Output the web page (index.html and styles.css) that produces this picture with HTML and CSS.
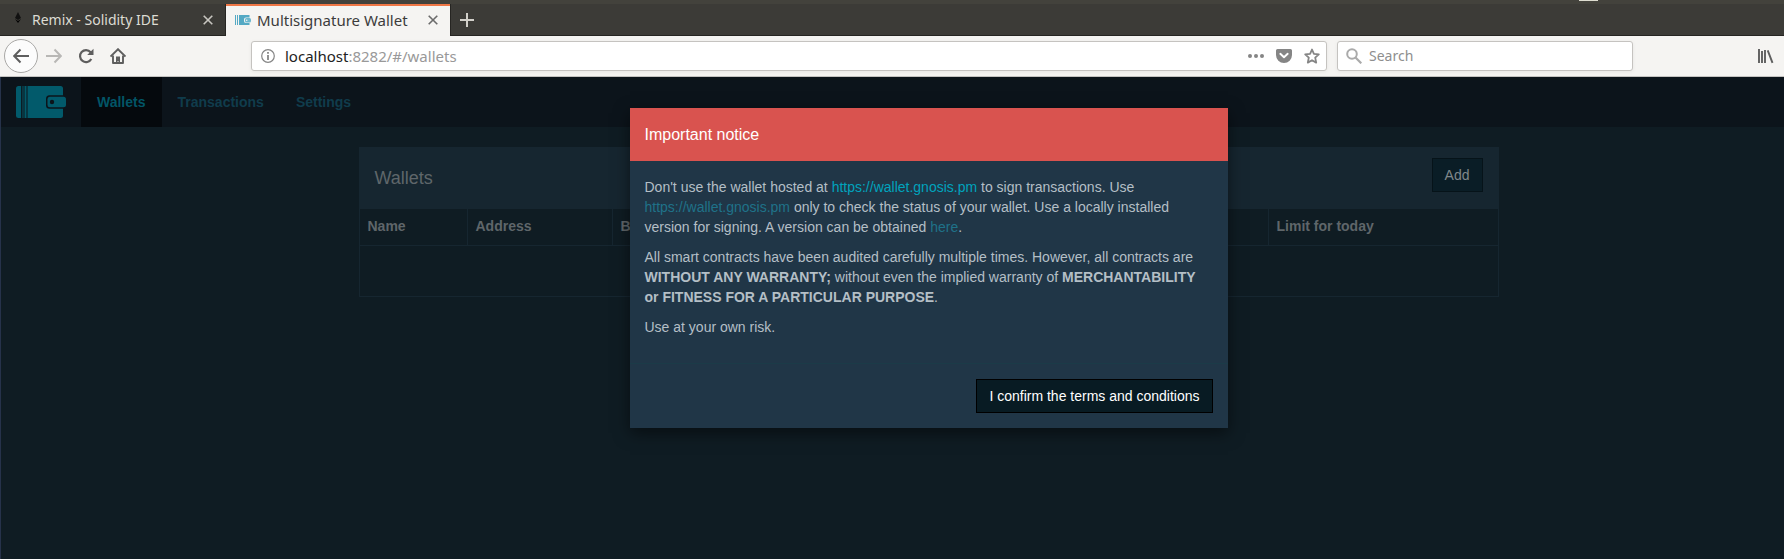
FILE: index.html
```html
<!DOCTYPE html>
<html lang="en">
<head>
<meta charset="utf-8">
<title>Multisignature Wallet</title>
<link rel="stylesheet" href="styles.css">
</head>
<body>
<header class="browser">
  <div class="desktop-edge"><span class="desktop-mark"></span></div>
  <div class="tabs">
    <div class="tab">
      <svg class="tab-icon" viewBox="0 0 16 16" width="16" height="16"><path d="M8 0 11 6 8 8 5 6Z" fill="#111"/><path d="M5 7 8 9 11 7 8 11Z" fill="#000"/></svg>
      <span class="tab-title">Remix - Solidity IDE</span>
      <button class="tab-close" aria-label="Close tab"><svg viewBox="0 0 10 10" width="10" height="10"><path d="M.7.7 9.3 9.3M9.3.7.7 9.3" fill="none" stroke="currentColor" stroke-width="1.6"/></svg></button>
    </div>
    <div class="tab tab-active">
      <svg class="tab-icon" viewBox="0 0 16 16" width="16" height="16"><path d="M0 3h1v10H0zM2 3h1v10H2zM4 3h10.500v2.500H11a2 2 0 0 0-2 2v1.500a2 2 0 0 0 2 2h3.500v2H4z" fill="#54a9c4"/><rect x="10" y="6" width="6" height="4.500" rx="1.500" fill="#6cb8cf"/><circle cx="11.700" cy="8.200" r=".8" fill="#f5f4f2"/></svg>
      <span class="tab-title">Multisignature Wallet</span>
      <button class="tab-close" aria-label="Close tab"><svg viewBox="0 0 10 10" width="10" height="10"><path d="M.7.7 9.3 9.3M9.3.7.7 9.3" fill="none" stroke="currentColor" stroke-width="1.6"/></svg></button>
    </div>
    <button class="new-tab" aria-label="New tab"><svg viewBox="0 0 14 14" width="14" height="14"><path d="M7 0v14M0 7h14" stroke="currentColor" stroke-width="2"/></svg></button>
  </div>
  <div class="toolbar">
    <div class="nav-buttons">
      <button class="nav-button back" aria-label="Back"><svg viewBox="0 0 16 16" width="16" height="16"><path d="M16 8H1.500M7.500 1.500 1.200 8l6.300 6.500" fill="none" stroke="currentColor" stroke-width="2"/></svg></button>
      <button class="nav-button forward" aria-label="Forward"><svg viewBox="0 0 16 16" width="16" height="16"><path d="M0 8h14.500M8.500 1.500 14.800 8l-6.300 6.500" fill="none" stroke="currentColor" stroke-width="2"/></svg></button>
      <button class="nav-button" aria-label="Reload"><svg viewBox="0 0 16 16" width="16" height="16"><path d="M12.600 4.200A6 6 0 1 0 13.300 11" fill="none" stroke="currentColor" stroke-width="2.200"/><path d="M15.500.800V7H9.200Z" fill="currentColor"/></svg></button>
      <button class="nav-button" aria-label="Home"><svg viewBox="0 0 16 16" width="16" height="16"><path d="M.5 8.500 8 1.200l7.500 7.300" fill="none" stroke="currentColor" stroke-width="1.900"/><path d="M3 7.500V15h10V7.500" fill="none" stroke="currentColor" stroke-width="1.900" stroke-linejoin="round"/><path d="M6 15V8.500h4V15H8.500v-2h-1v2z" fill="currentColor"/></svg></button>
    </div>
    <div class="field url-field">
      <svg viewBox="0 0 14 14" width="14" height="14"><circle cx="7" cy="7" r="6.300" fill="none" stroke="#858585" stroke-width="1.200"/><path d="M6.100 3h1.800v1.700H6.100zM6.100 6h1.800v5H6.100z" fill="#858585"/></svg>
      <a class="url" href="#/wallets"><span class="url-host">localhost</span>:8282/#/wallets</a>
      <button class="field-button" aria-label="Page actions"><svg viewBox="0 0 16 16" width="16" height="16"><g fill="currentColor"><circle cx="2" cy="8" r="2"/><circle cx="8" cy="8" r="2"/><circle cx="14" cy="8" r="2"/></g></svg></button>
      <button class="field-button" aria-label="Save to Pocket"><svg viewBox="0 0 16 16" width="16" height="16"><path d="M1.500 1h13A1.500 1.500 0 0 1 16 2.500V7A8 8 0 0 1 0 7V2.500A1.500 1.500 0 0 1 1.500 1Z" fill="currentColor"/><path d="M4.300 5.800 8 9.300l3.700-3.500" fill="none" stroke="#fff" stroke-width="1.900" stroke-linecap="round" stroke-linejoin="round"/></svg></button>
      <button class="field-button" aria-label="Bookmark"><svg viewBox="0 0 16 16" width="16" height="16"><path d="m8 1.500 1.900 4.300 4.900.5-3.600 3.300 1 5L8 12.200l-4.200 2.400 1-5L1.200 6.300l4.900-.5Z" fill="none" stroke="currentColor" stroke-width="1.800" stroke-linejoin="round"/></svg></button>
    </div>
    <label class="field search-field">
      <svg viewBox="0 0 16 16" width="16" height="16"><circle cx="6" cy="6" r="4.800" fill="none" stroke="#aaa" stroke-width="2"/><path d="m9.500 9.500 5.800 5.800" stroke="#aaa" stroke-width="2.200"/></svg>
      <input class="search-input" type="text" placeholder="Search" aria-label="Search">
    </label>
    <button class="library" aria-label="Library"><svg viewBox="0 0 16 16" width="16" height="16"><path d="M1 1v14M4 3v12M7 2v13M9.700 2.300l4.800 12.500" fill="none" stroke="currentColor" stroke-width="1.900"/></svg></button>
  </div>
</header>
<main class="page">
  <nav class="navbar">
    <a class="brand" href="#/" aria-label="Multisignature Wallet"><svg viewBox="0 0 50 32" width="50" height="32"><rect width="47" height="32" rx="2.500" fill="#025a6b"/><path d="M5.500 0v32M8 0v32M11 0v32" stroke="#0c141b" stroke-width="1"/><path d="M6.500 0v32" stroke="#0a3742" stroke-width="1.500"/><path d="M47 9.200H33.500a3.500 3.500 0 0 0-3.500 3.500v6.600a3.500 3.500 0 0 0 3.500 3.500H47z" fill="#0c141b"/><rect x="31.500" y="10.700" width="18.500" height="10.600" rx="2.500" fill="#025a6b"/><circle cx="36" cy="16" r="2.200" fill="#0c141b"/></svg></a>
    <a class="nav-link nav-link-active" href="#/wallets">Wallets</a>
    <a class="nav-link" href="#/transactions">Transactions</a>
    <a class="nav-link" href="#/settings">Settings</a>
  </nav>
  <div class="content">
    <section class="panel">
      <div class="panel-head">
        <h1 class="panel-title">Wallets</h1>
        <button class="button button-dim">Add</button>
      </div>
      <table class="wallets">
        <colgroup><col class="col-name"><col class="col-address"><col class="col-balance"><col class="col-today"></colgroup>
        <thead><tr><th>Name</th><th>Address</th><th>Balance</th><th>Limit for today</th></tr></thead>
      </table>
      <div class="panel-foot"></div>
    </section>
    <div class="dialog" role="dialog" aria-labelledby="notice-title">
      <div class="dialog-head"><h2 class="dialog-title" id="notice-title">Important notice</h2></div>
      <div class="dialog-body">
        <p>Don't use the wallet hosted at <a class="link link-focus" href="#wallet">https://wallet.gnosis.pm</a> to sign transactions. Use <a class="link" href="#wallet">https://wallet.gnosis.pm</a> only to check the status of your wallet. Use a locally installed version for signing. A version can be obtained <a class="link" href="#releases">here</a>.</p>
        <p>All smart contracts have been audited carefully multiple times. However, all contracts are <b>WITHOUT ANY WARRANTY;</b> without even the implied warranty of <b>MERCHANTABILITY or FITNESS FOR A PARTICULAR PURPOSE</b>.</p>
        <p>Use at your own risk.</p>
      </div>
      <div class="dialog-foot"><button class="button">I confirm the terms and conditions</button></div>
    </div>
  </div>
</main>
</body>
</html>
```
FILE: styles.css
```css
* { box-sizing: border-box; }
html, body { height: 100%; }
body {
  margin: 0;
  display: flex;
  flex-direction: column;
  overflow: hidden;
  background: #0f1c23;
  font-family: "Liberation Sans", Arial, sans-serif;
  font-size: 14px;
  line-height: 20px;
}
button {
  margin: 0;
  padding: 0;
  border: 0;
  background: none;
  color: inherit;
  font: inherit;
}
a { text-decoration: none; }
svg { display: block; flex: none; }

/* Browser window */
.browser {
  font-family: "Noto Sans", "Open Sans", sans-serif;
  font-size: 14px;
  border-bottom: 1px solid #c4c3c1;
}
.desktop-edge {
  display: flex;
  justify-content: flex-end;
  height: 4px;
  padding-right: 186px;
  background: #43423c;
}
.desktop-mark { width: 19px; height: 1px; background: #dddcd0; }
.tabs {
  display: flex;
  height: 32px;
  background: #3c3b37;
  box-shadow: inset 0 -1px #262522;
}
.tab {
  display: flex;
  align-items: center;
  width: 225px;
  padding: 0 12px 0 10px;
  color: #dddbd3;
}
.tab-icon { margin-right: 6px; }
.tab-title { flex: 1; white-space: nowrap; }
.tab-close { color: #c8c6c0; }
.tab-active {
  width: 226px;
  padding-left: 9px;
  border: solid #262522;
  border-width: 0 1px;
  background: #f5f4f2;
  box-shadow: inset 0 2px #f07746;
  color: #3c3c3c;
  font-size: 15px;
}
.tab-active .tab-close { color: #6b6b6b; }
.new-tab { padding: 0 9px; color: #d2d0ca; }
.toolbar {
  display: flex;
  align-items: center;
  height: 40px;
  padding: 0 10px 0 4px;
  background: #f5f4f2;
}
.nav-buttons { display: flex; align-items: center; width: 247px; }
.nav-button {
  display: flex;
  align-items: center;
  justify-content: center;
  width: 32px;
  height: 32px;
  color: #5e5e5e;
}
.back {
  width: 34px;
  height: 34px;
  border: 1px solid #a9a8a6;
  border-radius: 50%;
  background: #fcfcfc;
}
.forward { color: #b8b7b5; }
.field {
  display: flex;
  align-items: center;
  height: 30px;
  border: 1px solid #c5c3c0;
  border-radius: 3px;
  background: #fff;
  box-shadow: 0 1px 4px rgba(0, 0, 0, .06);
}
.url-field { flex: 1; gap: 10px; padding: 0 6px 0 9px; }
.url { flex: 1; color: #999; font-size: 15px; }
.url-host { color: #222; }
.field-button { color: #858585; margin-left: 2px; }
.search-field { gap: 7px; width: 296px; margin-left: 10px; padding: 0 8px; }
.search-input {
  flex: 1;
  min-width: 0;
  padding: 0;
  border: 0;
  outline: 0;
  background: none;
  font: inherit;
}
.search-input::placeholder { color: #8e8e8e; opacity: 1; }
.library { margin-left: 125px; color: #5e5e5e; }

/* Wallet application */
.page { flex: 1; border-left: 1px solid #26324a; }
.navbar {
  display: flex;
  align-items: stretch;
  height: 50px;
  background: #0c141b;
}
.brand { display: flex; align-items: center; padding: 0 15px; }
.nav-link {
  display: flex;
  align-items: center;
  padding: 0 16px;
  color: #103c4c;
  font-weight: bold;
}
.nav-link-active { background: #05090d; color: #025566; }
.content { position: relative; padding: 20px 0 0 72px; }
.panel { width: 1140px; max-width: 100%; margin: 0 auto; }
.panel-head {
  display: flex;
  align-items: flex-start;
  justify-content: space-between;
  height: 62px;
  padding: 11px 16px;
  background: #162630;
}
.panel-title {
  margin: 0;
  color: #5f666a;
  font-size: 18px;
  font-weight: normal;
  line-height: 40px;
}
.button {
  height: 34px;
  padding: 0 12px;
  border: 1px solid #000;
  background: #081b23;
  color: #fff;
}
.button-dim { border-color: #061319; background: #0a1d26; color: #80878a; }
.wallets {
  width: 100%;
  border-collapse: collapse;
  table-layout: fixed;
}
.wallets th {
  height: 36px;
  padding: 0 8px 2px;
  border: 1px solid #162630;
  border-top: 0;
  color: #5f666a;
  text-align: left;
  white-space: nowrap;
}
.col-name { width: 108px; }
.col-address { width: 145px; }
.col-today { width: 230px; }
.panel-foot { height: 51px; border: 1px solid #162630; border-top: 0; }
.dialog {
  position: absolute;
  top: -19px;
  left: calc(50% + 36px);
  width: 598px;
  transform: translateX(-50%);
  background: #203647;
  box-shadow: 0 5px 15px rgba(0, 0, 0, .5);
  color: #b4bfc6;
}
.dialog-head { padding: 15px; background: #d9534f; }
.dialog-title {
  margin: 0;
  color: #fff;
  font-size: 16px;
  font-weight: normal;
  line-height: 23px;
}
.dialog-body { padding: 16px 15px; }
.dialog-body p { margin: 0 0 10px; }
.link { color: #1f7289; }
.link-focus { color: #00a3bd; }
.dialog-foot {
  display: flex;
  justify-content: flex-end;
  padding: 15px;
  border-top: 1px solid #1b3b48;
}
```
